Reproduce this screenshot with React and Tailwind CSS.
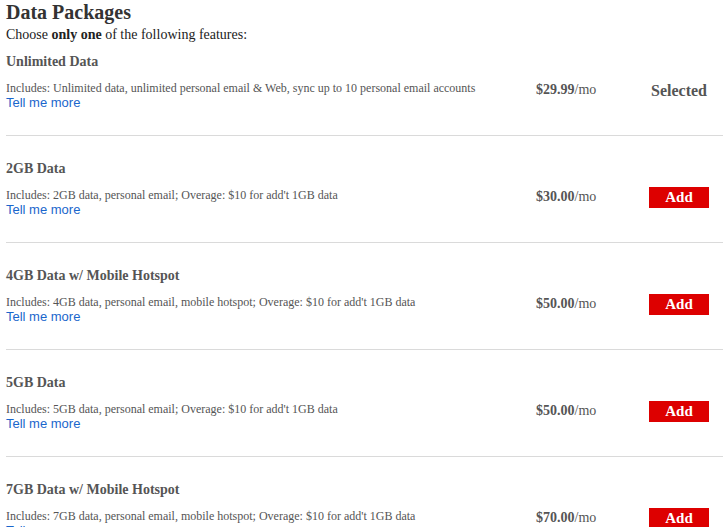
const packages = [
  {
    name: 'Unlimited Data',
    desc: 'Includes: Unlimited data, unlimited personal email & Web, sync up to 10 personal email accounts',
    price: '$29.99',
    selected: true,
  },
  {
    name: '2GB Data',
    desc: "Includes: 2GB data, personal email; Overage: $10 for add't 1GB data",
    price: '$30.00',
  },
  {
    name: '4GB Data w/ Mobile Hotspot',
    desc: "Includes: 4GB data, personal email, mobile hotspot; Overage: $10 for add't 1GB data",
    price: '$50.00',
  },
  {
    name: '5GB Data',
    desc: "Includes: 5GB data, personal email; Overage: $10 for add't 1GB data",
    price: '$50.00',
  },
  {
    name: '7GB Data w/ Mobile Hotspot',
    desc: "Includes: 7GB data, personal email, mobile hotspot; Overage: $10 for add't 1GB data",
    price: '$70.00',
  },
];

function PackageRow({ pkg, first }) {
  return (
    <div className={`${first ? 'pt-[9px]' : 'pt-[24px] border-t border-[#dadada]'} pb-[25px]`}>
      <h3 className="text-[14px] leading-[18px] font-bold text-[#555]">{pkg.name}</h3>
      <div className="mt-[10px] grid grid-cols-[1fr_113px_60px] items-start pr-[14px]">
        <div>
          <p className="text-[12px] leading-[14px] text-[#555]">{pkg.desc}</p>
          <a href="#" className="block text-[13px] leading-[15px] text-[#1a66cc] font-['Liberation_Sans',Arial,sans-serif]">
            Tell me more
          </a>
        </div>
        <div className="text-[14px] leading-[18px] text-[#555]">
          <span className="font-bold">{pkg.price}</span>/mo
        </div>
        {pkg.selected ? (
          <div className="text-center text-[16px] leading-[20px] font-bold text-[#555]">Selected</div>
        ) : (
          <button className="-mt-px h-[21px] w-[60px] bg-[#dd0000] text-white text-[15px] leading-[21px] font-bold">
            Add
          </button>
        )}
      </div>
    </div>
  );
}

export default function App() {
  return (
    <div className="min-h-screen bg-white pl-[6px] font-['Liberation_Serif','Times_New_Roman',serif]">
      <h1 className="text-[20px] leading-[24px] font-bold text-[#333]">Data Packages</h1>
      <p className="mt-[2px] text-[14px] leading-[18px] text-[#222]">
        Choose <b>only one</b> of the following features:
      </p>
      {packages.map((pkg, i) => (
        <PackageRow key={pkg.name} pkg={pkg} first={i === 0} />
      ))}
    </div>
  );
}
